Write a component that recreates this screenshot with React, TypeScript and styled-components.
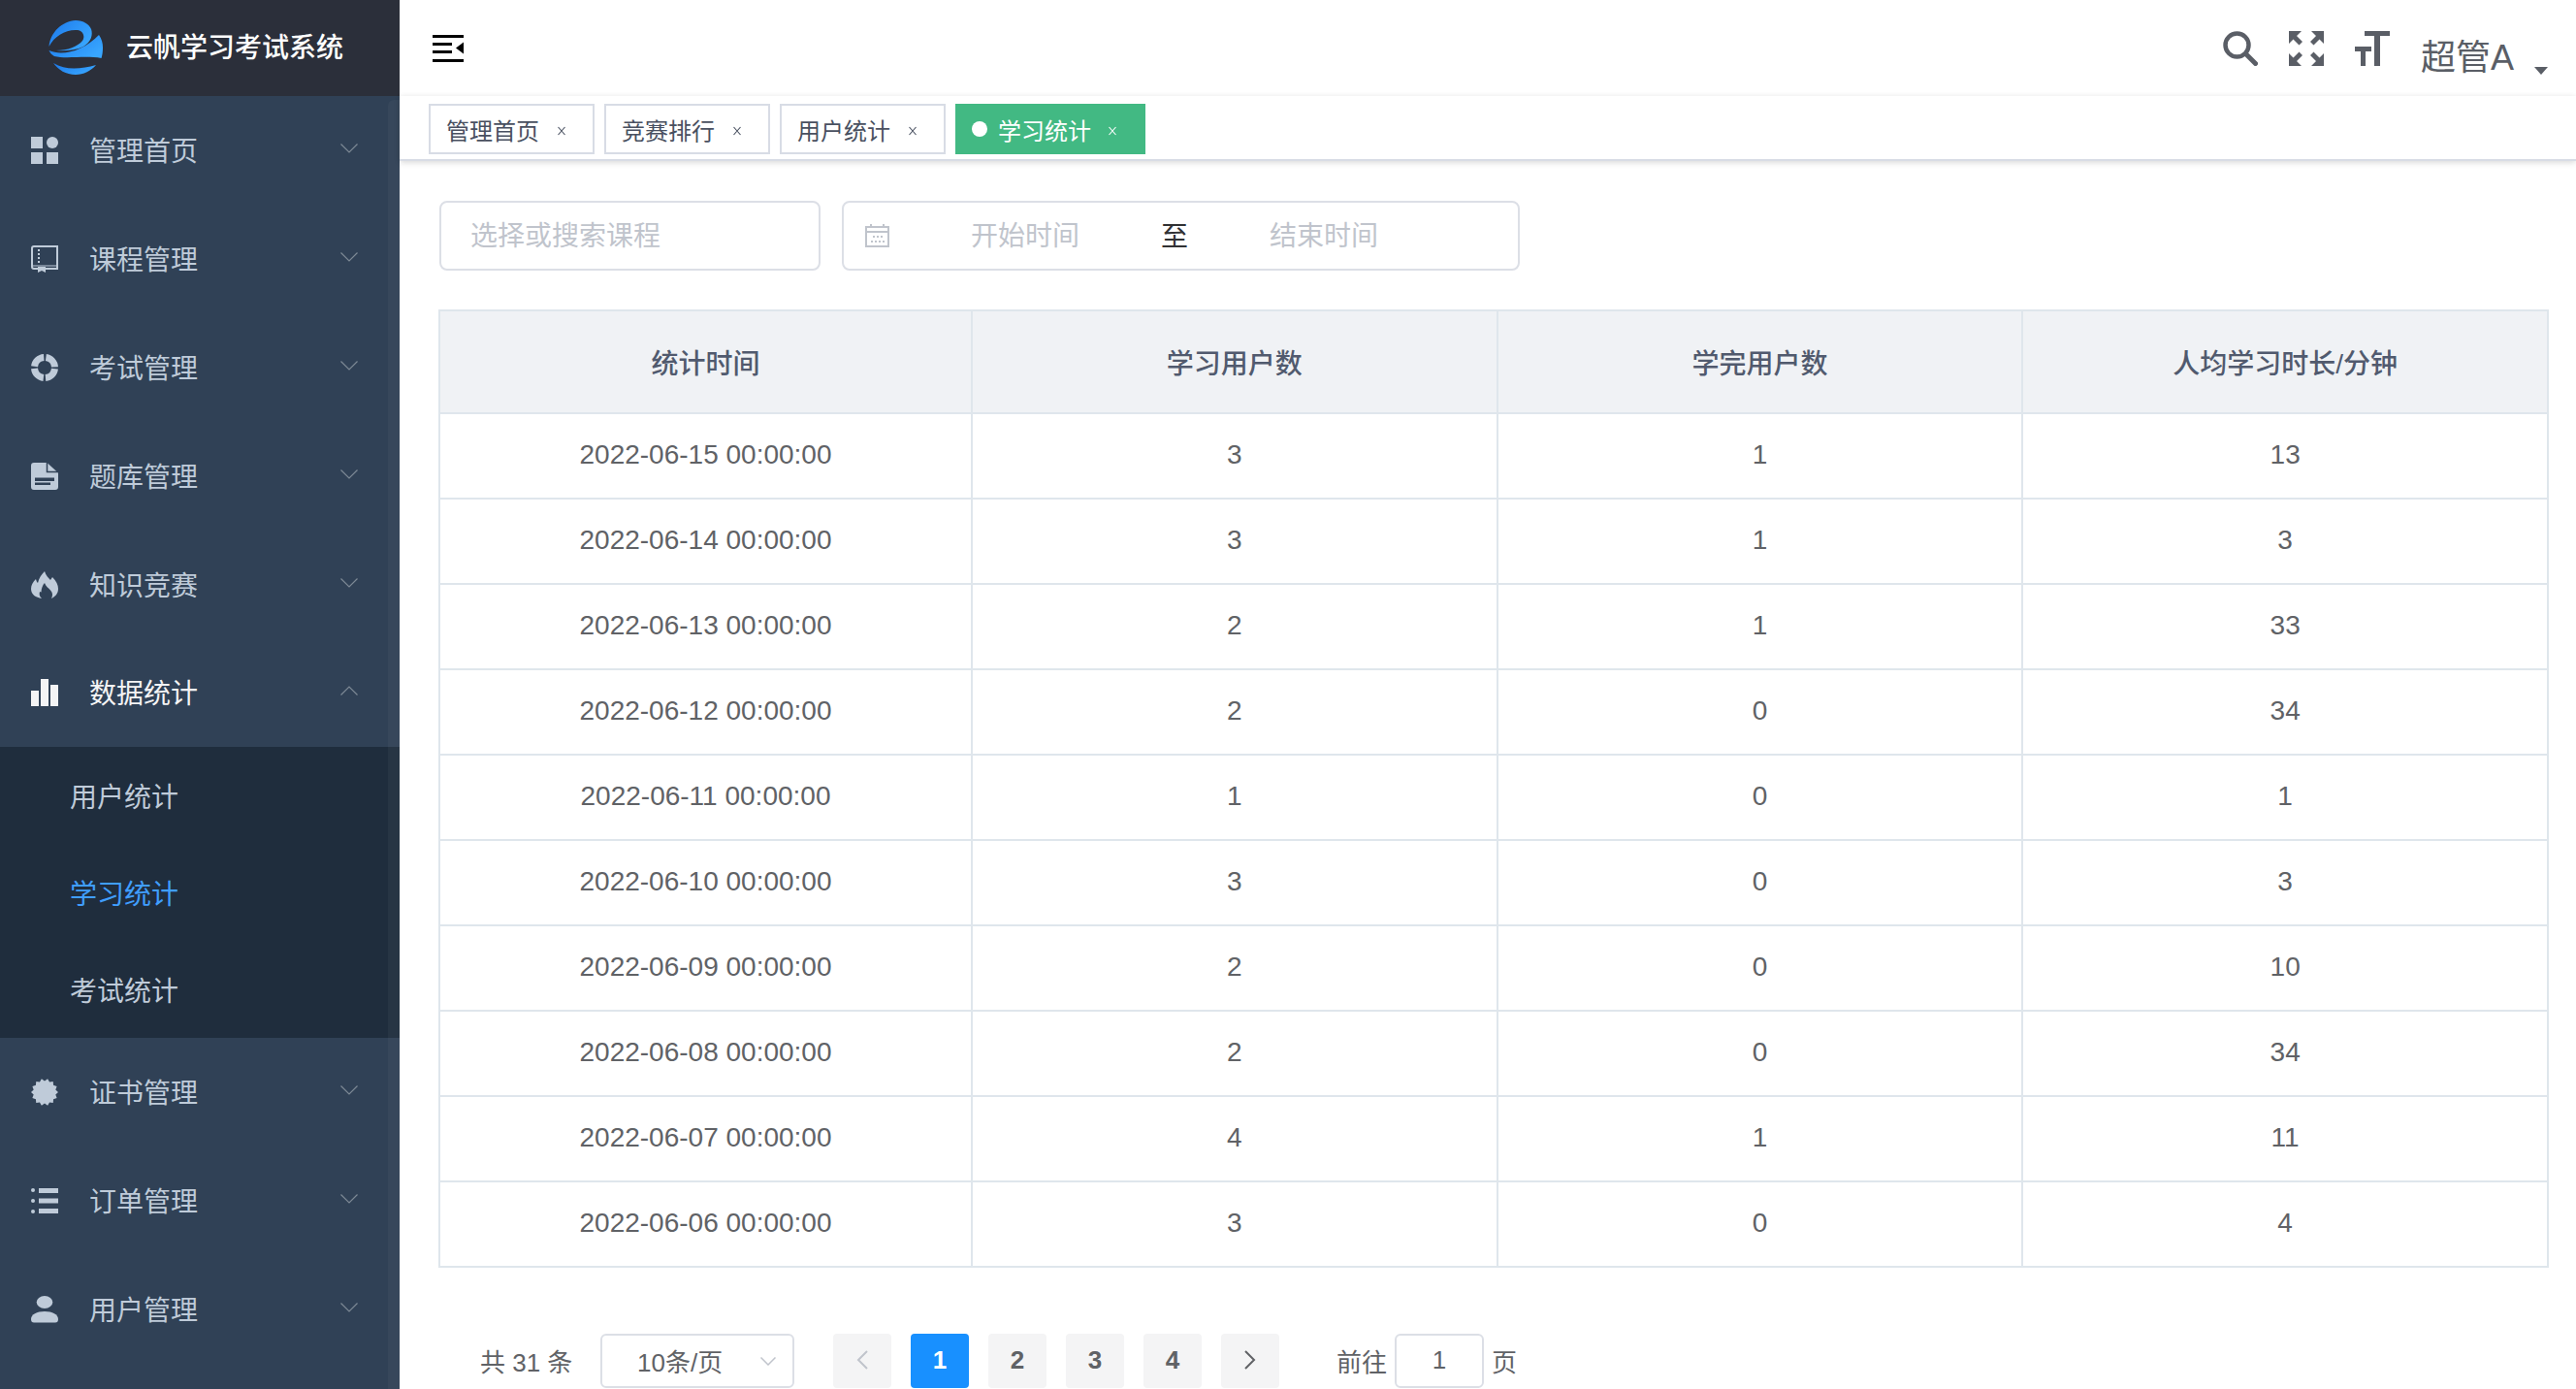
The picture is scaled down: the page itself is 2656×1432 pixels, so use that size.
import styled, { createGlobalStyle } from "styled-components";

const GlobalStyle = createGlobalStyle`
  html, body {
    margin: 0;
    height: 100%;
    overflow: hidden;
    background: #fff;
  }
  body {
    font-family: "Liberation Sans", "Noto Sans CJK SC", sans-serif;
  }
  * {
    box-sizing: border-box;
  }
`;

const rows = [
  ["2022-06-15 00:00:00", 3, 1, 13],
  ["2022-06-14 00:00:00", 3, 1, 3],
  ["2022-06-13 00:00:00", 2, 1, 33],
  ["2022-06-12 00:00:00", 2, 0, 34],
  ["2022-06-11 00:00:00", 1, 0, 1],
  ["2022-06-10 00:00:00", 3, 0, 3],
  ["2022-06-09 00:00:00", 2, 0, 10],
  ["2022-06-08 00:00:00", 2, 0, 34],
  ["2022-06-07 00:00:00", 4, 1, 11],
  ["2022-06-06 00:00:00", 3, 0, 4],
];

const burst = Array.from({ length: 28 }, (_, i) => {
  const r = i % 2 ? 11.6 : 14;
  const a = (i * Math.PI) / 14;
  return `${(14 + r * Math.cos(a)).toFixed(2)},${(14 + r * Math.sin(a)).toFixed(2)}`;
}).join(" ");

const Logo = () => (
  <svg width="56" height="56" viewBox="0 0 56 56">
    <defs>
      <linearGradient id="lg" x1="0" y1="0" x2="1" y2="0.6">
        <stop offset="0" stopColor="#1c78ea" />
        <stop offset="1" stopColor="#38a6ff" />
      </linearGradient>
    </defs>
    <path
      fill="url(#lg)"
      d="M.5 27C2 12 14 1 28 0c8 0 14 4 16 9 2 6 0 13-8 18-8 4-20 5-28 4 12 0 22-4 27-10 3-4 1-10-5-11C18 9 6 16 .5 27Z"
    />
    <path
      fill="url(#lg)"
      d="M.5 31c13.500 6 35.500 1 51.500-16 3 4 4 9 4 13 0 4-.5 8-1.500 11-16-3-36.500 1-48.500-2C3.500 35.500 1.500 33.500 .5 31Z"
    />
    <path
      fill="url(#lg)"
      d="M5 44c13 8 29 6 44 2-5 6-13 10-21 10-10 0-18-5-23-12Z"
    />
  </svg>
);

const DashboardIcon = () => (
  <svg width="28" height="28" viewBox="0 0 28 28" fill="currentColor">
    <rect width="12" height="12" />
    <circle cx="22" cy="6" r="6" />
    <rect y="16" width="12" height="12" />
    <rect x="16" y="16" width="12" height="12" />
  </svg>
);

const BookIcon = () => (
  <svg width="28" height="28" viewBox="0 0 28 28" fill="currentColor">
    <path
      fill="none"
      stroke="currentColor"
      strokeWidth="2"
      d="M1 3a2 2 0 0 1 2-2h24v23H3a2 2 0 0 1-2-2Z"
    />
    <rect x="1" y="20" width="26" height="2" opacity=".5" />
    <rect x="7" y="4" width="2" height="2" />
    <rect x="7" y="8" width="2" height="2" />
    <rect x="7" y="12" width="2" height="2" />
    <rect x="7" y="16" width="2" height="2" />
    <path d="M7 22h8v6l-4-2-4 2Z" />
  </svg>
);

const ExamIcon = () => (
  <svg width="28" height="28" viewBox="0 0 28 28">
    <circle
      cx="14"
      cy="14"
      r="10.500"
      fill="none"
      stroke="currentColor"
      strokeWidth="7"
      strokeDasharray="14.300 2.190"
      strokeDashoffset="-1.100"
    />
  </svg>
);

const DocIcon = () => (
  <svg width="28" height="28" viewBox="0 0 28 28">
    <path
      fill="currentColor"
      fillRule="evenodd"
      d="M3 0h13.500L28 10.500V25a3 3 0 0 1-3 3H3a3 3 0 0 1-3-3V3a3 3 0 0 1 3-3Zm1 15.500V19h20v-3.500Zm0 5V23h16v-2.500Z"
    />
    <path fill="none" stroke="#304156" strokeWidth="1.500" d="M16.500 0v9.500H28" />
  </svg>
);

const FlameIcon = () => (
  <svg width="28" height="28" viewBox="0 0 28 28">
    <path
      fill="currentColor"
      d="M14 0c1 4 4 7 6 9l2-3c4 4 6 8 6 12 0 5-3 8-7 10 1.500-3 1.500-6-1-8.500-2-2.500-5-4-6-7.500-2 2-3.500 6-3.500 9.500L9 21c-1 3 0 5 2 7-6-1-11-4-11-10 0-4 2-7 5-10 .5 2 1 3 2 4 1-5 4-9 7-12Z"
    />
  </svg>
);

const ChartIcon = () => (
  <svg width="28" height="28" viewBox="0 0 28 28" fill="currentColor">
    <rect y="12" width="8" height="16" />
    <rect x="10" width="8" height="28" />
    <rect x="20" y="6" width="8" height="22" />
  </svg>
);

const BadgeIcon = () => (
  <svg width="28" height="28" viewBox="0 0 28 28">
    <polygon fill="currentColor" points={burst} />
  </svg>
);

const ListIcon = () => (
  <svg width="28" height="28" viewBox="0 0 28 28" fill="currentColor">
    <circle cx="2" cy="3" r="2" />
    <circle cx="2" cy="14" r="2" />
    <circle cx="2" cy="25" r="2" />
    <rect x="8" y="1" width="20" height="5" />
    <rect x="8" y="11.500" width="20" height="5" />
    <rect x="8" y="22" width="20" height="5" />
  </svg>
);

const UserIcon = () => (
  <svg width="28" height="28" viewBox="0 0 28 28" fill="currentColor">
    <ellipse cx="14" cy="6.500" rx="8.300" ry="6.500" />
    <path d="M0 24c0-5 6-8 14-8s14 3 14 8c0 2.500-1 3.500-3 3.500H3c-2 0-3-1-3-3.500Z" />
  </svg>
);

const HamburgerIcon = () => (
  <svg width="32" height="28" viewBox="0 0 32 28" fill="#000">
    <rect width="32" height="3" />
    <rect y="8" width="20" height="3" />
    <rect y="16" width="20" height="3" />
    <rect y="25" width="32" height="3" />
    <path d="M32 7.500v12l-8-6Z" />
  </svg>
);

const SearchIcon = () => (
  <svg width="36" height="36" viewBox="0 0 36 36" fill="none" stroke="currentColor">
    <circle cx="14.500" cy="14.500" r="12" strokeWidth="4.500" />
    <path d="M23.500 23.500 33.500 33.500" strokeWidth="5" strokeLinecap="round" />
  </svg>
);

const corner = "M0 0h13L8 5l6 6-3.500 3.500-6-6L0 13Z";

const ExpandIcon = () => (
  <svg width="36" height="36" viewBox="0 0 36 36" fill="currentColor">
    <path d={corner} />
    <path d={corner} transform="matrix(-1 0 0 1 36 0)" />
    <path d={corner} transform="matrix(1 0 0 -1 0 36)" />
    <path d={corner} transform="matrix(-1 0 0 -1 36 36)" />
  </svg>
);

const SizeIcon = () => (
  <svg width="36" height="36" viewBox="0 0 36 36" fill="currentColor">
    <rect x="10" width="26" height="5" />
    <rect x="20" width="6" height="36" />
    <rect y="16" width="17" height="5" />
    <rect x="6" y="16" width="5" height="20" />
  </svg>
);

const CalendarIcon = () => (
  <svg width="25" height="24" viewBox="0 0 25 24" fill="#c0c4cc">
    <path
      fill="none"
      stroke="#c0c4cc"
      strokeWidth="2"
      d="M1 3h23v20H1ZM1 8h23M6 0v4M19 0v4"
    />
    {[8, 12, 16].map((x) => (
      <rect key={x} x={x} y="12" width="2" height="2" />
    ))}
    {[6, 10, 14, 18].map((x) => (
      <rect key={x} x={x} y="17" width="2" height="2" />
    ))}
  </svg>
);

const CloseIcon = () => (
  <svg width="10" height="10" viewBox="0 0 10 10" fill="none" stroke="currentColor" strokeWidth="1.100">
    <path d="m1.500 1 7 8M8.500 1l-7 8" />
  </svg>
);

const Chevron = ({ up }: { up?: boolean }) => (
  <svg width="18" height="10" viewBox="0 0 18 10" fill="none" stroke="#7d8995" strokeWidth="1.200">
    <path d={up ? "M.5 9.500 9 1l8.500 8.500" : "M.5.500 9 9 17.500.500"} />
  </svg>
);

const menuTop = [
  { label: "管理首页", icon: <DashboardIcon /> },
  { label: "课程管理", icon: <BookIcon /> },
  { label: "考试管理", icon: <ExamIcon /> },
  { label: "题库管理", icon: <DocIcon /> },
  { label: "知识竞赛", icon: <FlameIcon /> },
];

const menuBottom = [
  { label: "证书管理", icon: <BadgeIcon /> },
  { label: "订单管理", icon: <ListIcon /> },
  { label: "用户管理", icon: <UserIcon /> },
];

const tags = ["管理首页", "竞赛排行", "用户统计"];

const App = () => {
  return (
    <Layout>
      <GlobalStyle />
      <Sidebar>
        <Brand>
          <Logo />
          <BrandTitle>云帆学习考试系统</BrandTitle>
        </Brand>
        {menuTop.map((m) => (
          <MenuItem key={m.label}>
            <MenuIcon>{m.icon}</MenuIcon>
            <MenuLabel>{m.label}</MenuLabel>
            <MenuArrow>
              <Chevron />
            </MenuArrow>
          </MenuItem>
        ))}
        <MenuItem $open>
          <MenuIcon>
            <ChartIcon />
          </MenuIcon>
          <MenuLabel>数据统计</MenuLabel>
          <MenuArrow>
            <Chevron up />
          </MenuArrow>
        </MenuItem>
        <SubMenu>
          <SubItem>用户统计</SubItem>
          <SubItem $active>学习统计</SubItem>
          <SubItem>考试统计</SubItem>
        </SubMenu>
        {menuBottom.map((m) => (
          <MenuItem key={m.label}>
            <MenuIcon>{m.icon}</MenuIcon>
            <MenuLabel>{m.label}</MenuLabel>
            <MenuArrow>
              <Chevron />
            </MenuArrow>
          </MenuItem>
        ))}
        <ScrollTrack />
      </Sidebar>
      <Main>
        <Navbar>
          <Hamburger>
            <HamburgerIcon />
          </Hamburger>
          <NavRight>
            <NavIcon>
              <SearchIcon />
            </NavIcon>
            <NavIcon>
              <ExpandIcon />
            </NavIcon>
            <NavIcon>
              <SizeIcon />
            </NavIcon>
            <UserName>超管A</UserName>
            <Caret />
          </NavRight>
        </Navbar>
        <TagsBar>
          {tags.map((t) => (
            <Tag key={t}>
              {t}
              <TagClose>
                <CloseIcon />
              </TagClose>
            </Tag>
          ))}
          <Tag $active>
            <TagDot />
            学习统计
            <TagClose $active>
              <CloseIcon />
            </TagClose>
          </Tag>
        </TagsBar>
        <Content>
          <Filters>
            <SearchInput placeholder="选择或搜索课程" />
            <DateRange>
              <CalendarSlot>
                <CalendarIcon />
              </CalendarSlot>
              <DateInput placeholder="开始时间" />
              <DateSep>至</DateSep>
              <DateInput placeholder="结束时间" />
            </DateRange>
          </Filters>
          <Table>
            <thead>
              <tr>
                <th>统计时间</th>
                <th>学习用户数</th>
                <th>学完用户数</th>
                <th>人均学习时长/分钟</th>
              </tr>
            </thead>
            <tbody>
              {rows.map((r) => (
                <tr key={r[0]}>
                  {r.map((v, i) => (
                    <td key={i}>{v}</td>
                  ))}
                </tr>
              ))}
            </tbody>
          </Table>
          <Pagination>
            <Total>共 31 条</Total>
            <PageSize>
              10条/页
              <PageSizeArrow>
                <svg width="16" height="9" viewBox="0 0 16 9" fill="none" stroke="#c0c4cc" strokeWidth="1.500">
                  <path d="M.5.500 8 8 15.500.500" />
                </svg>
              </PageSizeArrow>
            </PageSize>
            <Pager>
              <PageBtn $disabled>
                <svg width="12" height="20" viewBox="0 0 12 20" fill="none" stroke="currentColor" strokeWidth="2">
                  <path d="M11 1 2 10l9 9" />
                </svg>
              </PageBtn>
              <PageBtn $active>1</PageBtn>
              <PageBtn>2</PageBtn>
              <PageBtn>3</PageBtn>
              <PageBtn>4</PageBtn>
              <PageBtn>
                <svg width="12" height="20" viewBox="0 0 12 20" fill="none" stroke="currentColor" strokeWidth="2">
                  <path d="m1 1 9 9-9 9" />
                </svg>
              </PageBtn>
            </Pager>
            <Jump>
              <JumpLabel>前往</JumpLabel>
              <JumpInput defaultValue="1" />
              <JumpLabel>页</JumpLabel>
            </Jump>
          </Pagination>
        </Content>
      </Main>
    </Layout>
  );
};

export default App;

const Layout = styled.div`
  display: flex;
  width: 100%;
  height: 100vh;
  overflow: hidden;
`;

const Sidebar = styled.aside`
  position: relative;
  flex: 0 0 412px;
  height: 100%;
  overflow: hidden;
  background: #304156;
  font-family: "Noto Sans CJK SC", sans-serif;
`;

const ScrollTrack = styled.div`
  position: absolute;
  top: 103px;
  right: 0;
  bottom: 0;
  width: 12px;
  border-radius: 6px 0 0 0;
  background: rgba(144, 147, 153, 0.08);
`;

const Brand = styled.div`
  display: flex;
  align-items: center;
  height: 99px;
  padding: 0 0 2px 50px;
  background: #2b2f3a;
`;

const BrandTitle = styled.h1`
  margin: 0 0 3px 24px;
  font-size: 28px;
  font-weight: 500;
  color: #fff;
  white-space: nowrap;
`;

const MenuItem = styled.div<{ $open?: boolean }>`
  display: flex;
  align-items: center;
  height: 111.9px;
  padding-left: 32px;
  font-size: 28px;
  color: ${(p) => (p.$open ? "#f4f4f5" : "#bfcbd9")};
`;

const MenuIcon = styled.span`
  display: flex;
  width: 28px;
  height: 28px;
  margin-right: 32px;
`;

const MenuLabel = styled.span`
  padding-bottom: 2px;
`;

const MenuArrow = styled.span`
  display: flex;
  margin: 0 43px 4px auto;
`;

const SubMenu = styled.div`
  background: #1f2d3d;
`;

const SubItem = styled.div<{ $active?: boolean }>`
  display: flex;
  align-items: center;
  height: 100px;
  padding: 0 0 1px 72px;
  font-size: 28px;
  color: ${(p) => (p.$active ? "#409eff" : "#bfcbd9")};
`;

const Main = styled.main`
  flex: 1;
  min-width: 0;
  display: flex;
  flex-direction: column;
`;

const Navbar = styled.header`
  display: flex;
  align-items: center;
  flex: 0 0 99px;
  padding: 0 29px 0 34px;
  background: #fff;
`;

const Hamburger = styled.span`
  display: flex;
`;

const NavRight = styled.div`
  display: flex;
  align-items: center;
  margin-left: auto;
  color: #5a5e66;
`;

const NavIcon = styled.span`
  display: flex;
  margin-right: 32px;
`;

const UserName = styled.span`
  margin-top: 20px;
  font-size: 36px;
  line-height: 1;
  white-space: nowrap;
`;

const Caret = styled.span`
  width: 0;
  height: 0;
  margin: 46px 0 0 21px;
  border-style: solid;
  border-width: 8px 7px 0;
  border-color: #5a5e66 transparent transparent;
`;

const TagsBar = styled.nav`
  position: relative;
  z-index: 1;
  display: flex;
  align-items: flex-start;
  gap: 10px;
  flex: 0 0 67px;
  padding: 8px 0 0 30px;
  background: #fff;
  border-bottom: 2px solid #d8dce5;
  box-shadow: 0 2px 6px 0 rgba(0, 0, 0, 0.12), 0 0 6px 0 rgba(0, 0, 0, 0.04);
`;

const Tag = styled.span<{ $active?: boolean }>`
  display: flex;
  align-items: center;
  height: 52px;
  padding: 0 27px 0 ${(p) => (p.$active ? "15px" : "16px")};
  font-size: 24px;
  border: 2px solid ${(p) => (p.$active ? "#42b983" : "#d8dce5")};
  background: ${(p) => (p.$active ? "#42b983" : "#fff")};
  color: ${(p) => (p.$active ? "#fff" : "#495060")};
  white-space: nowrap;
`;

const TagDot = styled.span`
  width: 16px;
  height: 16px;
  margin-right: 11px;
  border-radius: 50%;
  background: #fff;
`;

const TagClose = styled.span<{ $active?: boolean }>`
  display: flex;
  margin: 4px 0 0 ${(p) => (p.$active ? "17px" : "18px")};
`;

const Content = styled.section`
  padding: 41px 28px 0 40px;
`;

const Filters = styled.div`
  display: flex;
  gap: 22px;
  margin-bottom: 40px;
`;

const SearchInput = styled.input`
  width: 393px;
  height: 72px;
  margin-left: 1px;
  padding: 2px 30px 0;
  border: 2px solid #dcdfe6;
  border-radius: 8px;
  outline: none;
  font: inherit;
  font-size: 28px;
  color: #606266;
  &::placeholder {
    color: #c0c4cc;
  }
`;

const DateRange = styled.div`
  display: flex;
  align-items: center;
  width: 699px;
  height: 72px;
  padding-left: 22px;
  border: 2px solid #dcdfe6;
  border-radius: 8px;
`;

const CalendarSlot = styled.span`
  display: flex;
  margin-right: 3px;
`;

const DateInput = styled.input`
  width: 274px;
  border: 0;
  outline: none;
  padding: 2px 0 0;
  text-align: center;
  font: inherit;
  font-size: 28px;
  &::placeholder {
    color: #c0c4cc;
  }
`;

const DateSep = styled.span`
  width: 34px;
  padding-bottom: 3px;
  text-align: center;
  font-size: 28px;
  color: #303133;
`;

const Table = styled.table`
  width: 2176px;
  table-layout: fixed;
  border-collapse: separate;
  border-spacing: 0;
  border-top: 2px solid #dfe6ec;
  border-left: 2px solid #dfe6ec;
  font-size: 28px;
  color: #606266;
  text-align: center;

  th,
  td {
    padding: 0;
    border-right: 2px solid #dfe6ec;
    border-bottom: 2px solid #dfe6ec;
  }
  th {
    height: 106px;
    background: #f0f2f5;
    color: #515a6e;
    font-weight: 500;
  }
  th:first-child {
    width: 549px;
  }
  td {
    height: 88px;
    padding-bottom: 2px;
  }
`;

const Pagination = styled.div`
  display: flex;
  align-items: center;
  margin: 68px 0 0 43px;
  font-size: 26px;
  color: #606266;
`;

const Total = styled.span`
  width: 124px;
  padding-bottom: 2px;
  white-space: nowrap;
`;

const PageSize = styled.div`
  display: flex;
  align-items: center;
  width: 200px;
  height: 56px;
  padding: 0 0 2px 36px;
  border: 2px solid #dcdfe6;
  border-radius: 6px;
`;

const PageSizeArrow = styled.span`
  display: flex;
  margin: 2px 0 0 39px;
`;

const Pager = styled.div`
  display: flex;
  gap: 20px;
  margin-left: 40px;
`;

const PageBtn = styled.span<{ $active?: boolean; $disabled?: boolean }>`
  display: flex;
  align-items: center;
  justify-content: center;
  width: 60px;
  height: 56px;
  padding-bottom: 2px;
  border-radius: 4px;
  font-weight: 700;
  background: ${(p) => (p.$active ? "#1890ff" : "#f4f4f5")};
  color: ${(p) => (p.$active ? "#fff" : p.$disabled ? "#c0c4cc" : "#606266")};
`;

const Jump = styled.div`
  display: flex;
  align-items: center;
  margin-left: 59px;
  white-space: nowrap;
`;

const JumpLabel = styled.span`
  padding-bottom: 2px;
`;

const JumpInput = styled.input`
  width: 92px;
  height: 56px;
  margin: 0 8px;
  padding: 0 0 2px;
  border: 2px solid #dcdfe6;
  border-radius: 6px;
  outline: none;
  text-align: center;
  font: inherit;
  color: #606266;
`;
